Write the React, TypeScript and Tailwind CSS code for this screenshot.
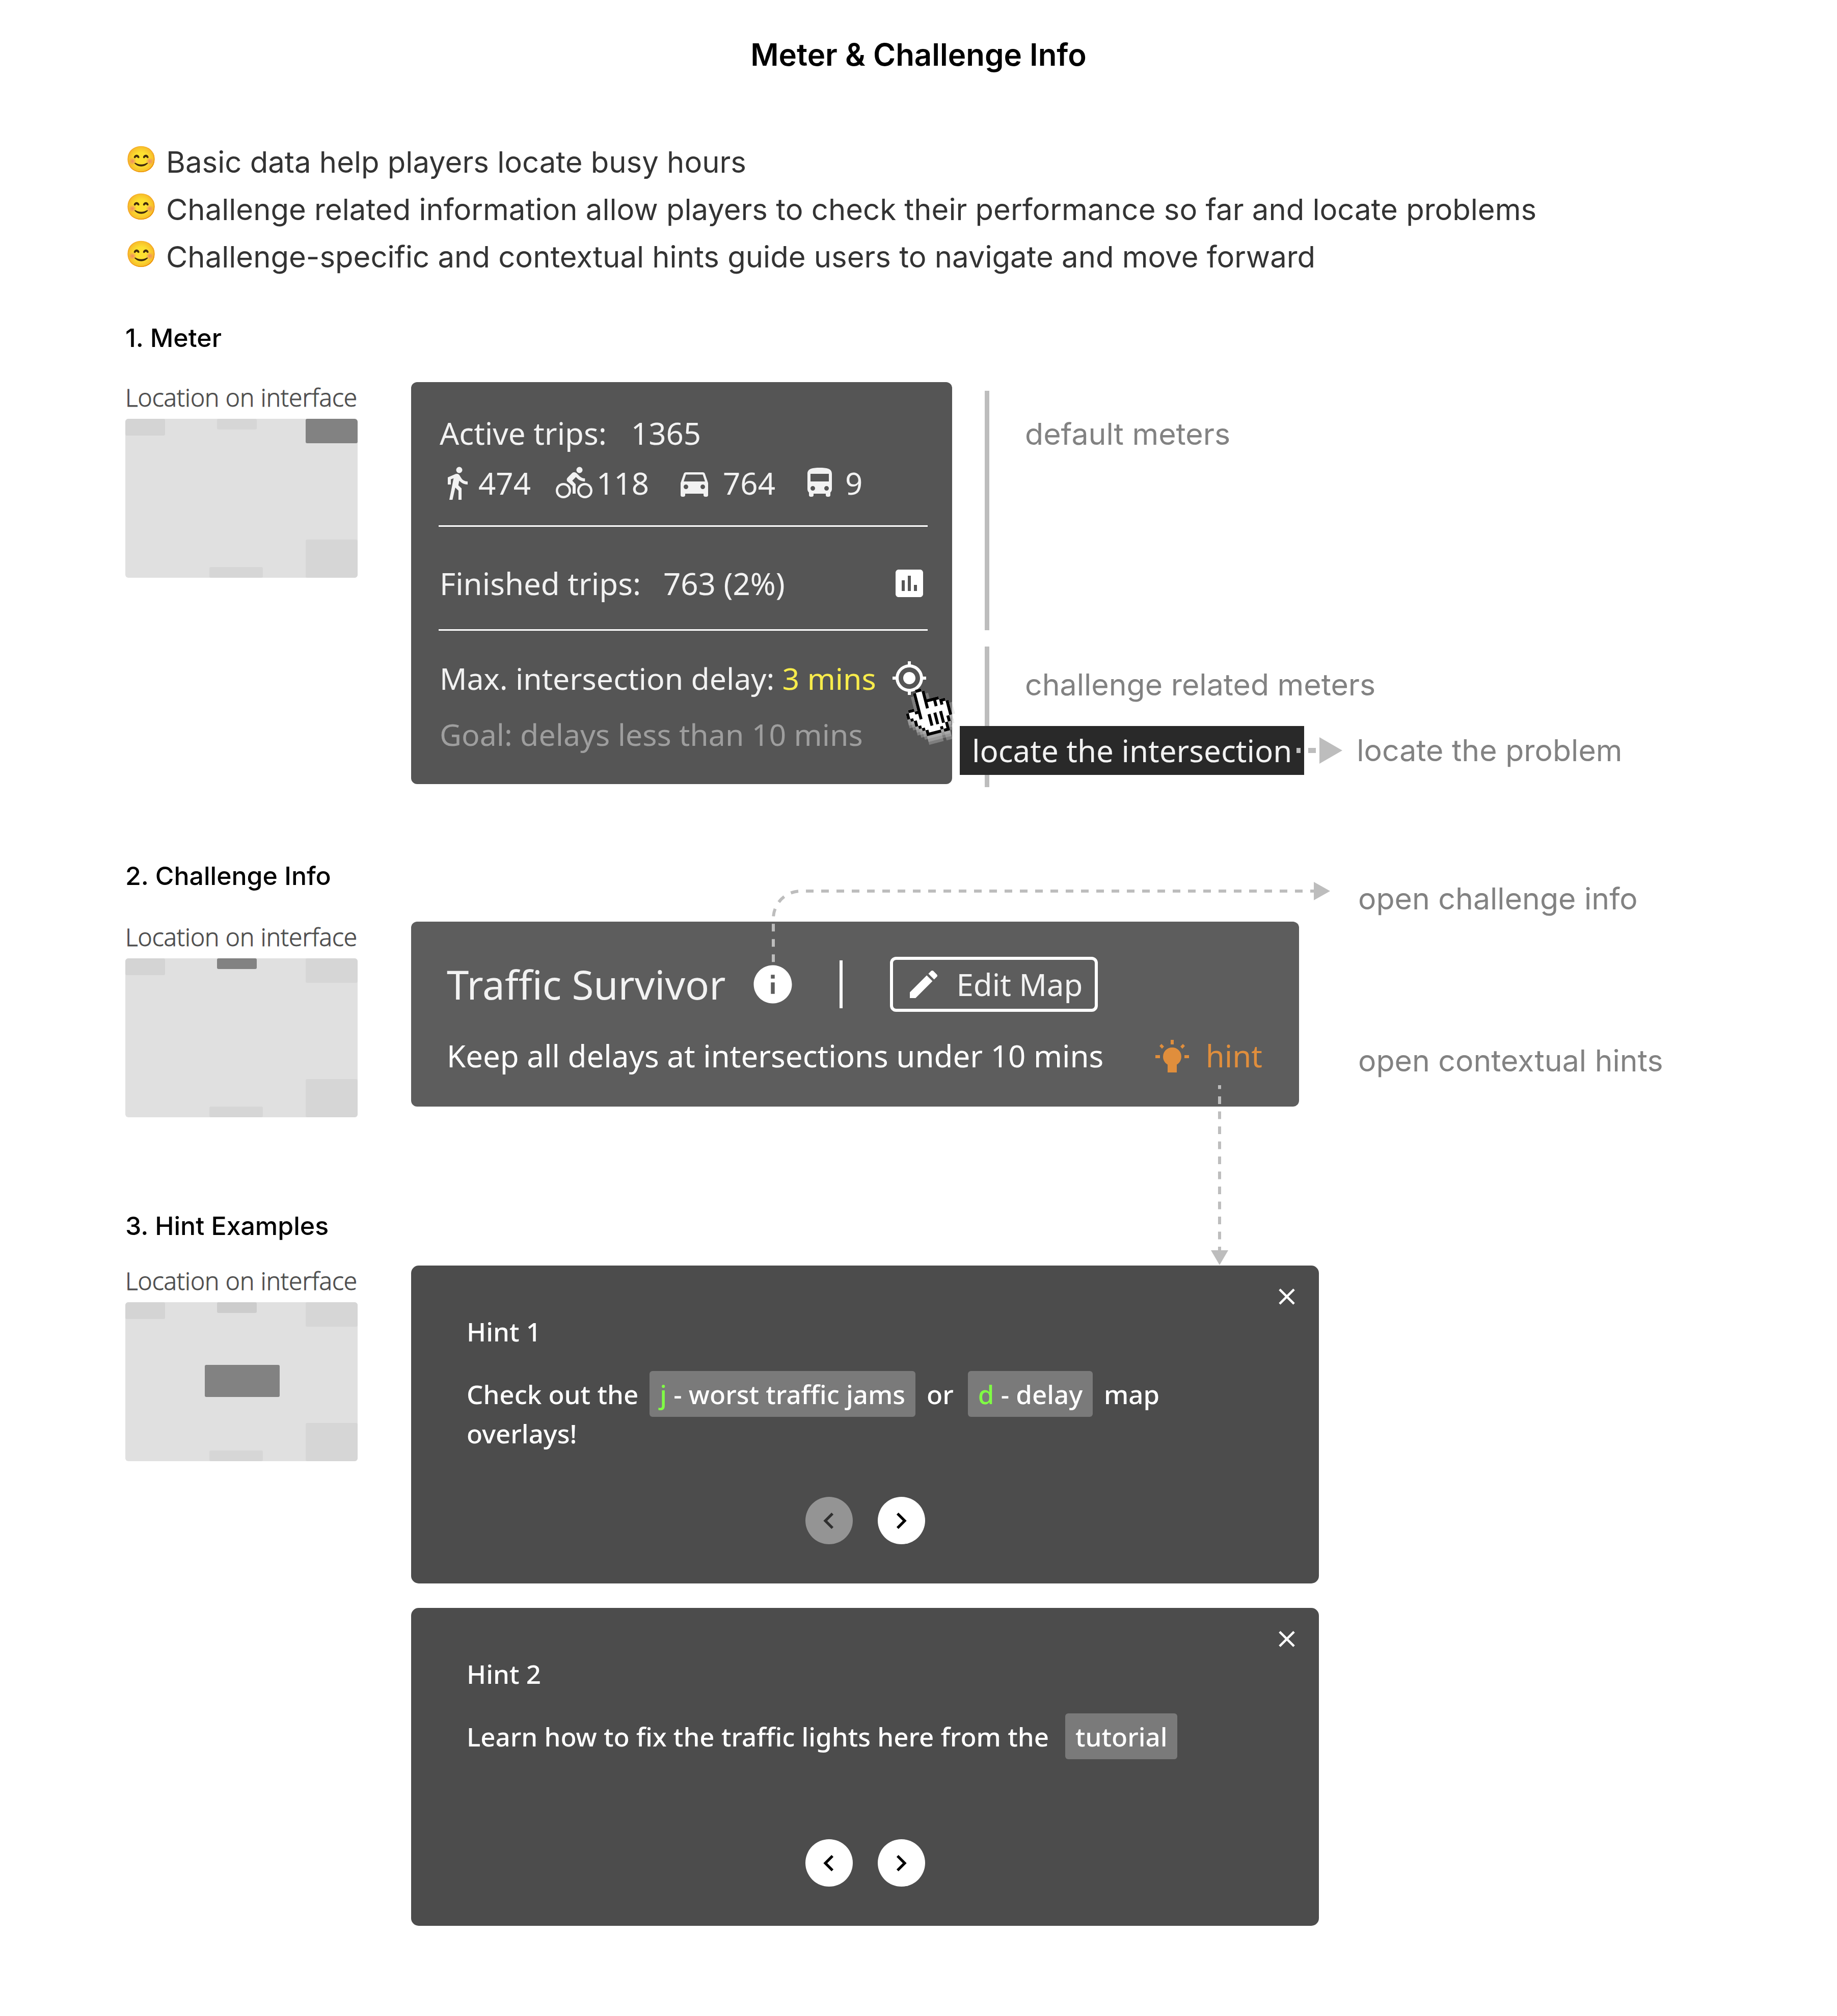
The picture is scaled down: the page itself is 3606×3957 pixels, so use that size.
import React from 'react';

const ICONS = {
  walk: 'M13.5 5.5c1.1 0 2-.9 2-2s-.9-2-2-2-2 .9-2 2 .9 2 2 2zM9.8 8.9L7 23h2.1l1.8-8 2.1 2v6h2v-7.5l-2.1-2 .6-3C14.8 12 16.8 13 19 13v-2c-1.9 0-3.5-1-4.3-2.4l-1-1.6c-.4-.6-1-1-1.7-1-.3 0-.5.1-.8.1L6 8.3V13h2V9.6l1.8-.7',
  bike: 'M15.5 5.5c1.1 0 2-.9 2-2s-.9-2-2-2-2 .9-2 2 .9 2 2 2zM5 12c-2.8 0-5 2.2-5 5s2.2 5 5 5 5-2.2 5-5-2.2-5-5-5zm0 8.5c-1.9 0-3.5-1.6-3.5-3.5s1.6-3.5 3.5-3.5 3.5 1.6 3.5 3.5-1.6 3.5-3.5 3.5zm5.8-10l2.4-2.4.8.8c1.3 1.3 3 2.1 5.1 2.1V9c-1.5 0-2.7-.6-3.6-1.5l-1.9-1.9c-.5-.4-1-.6-1.6-.6s-1.1.2-1.4.6L7.8 8.4c-.4.4-.6.9-.6 1.4 0 .6.2 1.1.6 1.4L11 14v5h2v-6.2l-2.2-2.3zM19 12c-2.8 0-5 2.2-5 5s2.2 5 5 5 5-2.2 5-5-2.2-5-5-5zm0 8.5c-1.9 0-3.5-1.6-3.5-3.5s1.6-3.5 3.5-3.5 3.5 1.6 3.5 3.5-1.6 3.5-3.5 3.5z',
  car: 'M18.92 6.01C18.72 5.42 18.16 5 17.5 5h-11c-.66 0-1.21.42-1.42 1.01L3 12v8c0 .55.45 1 1 1h1c.55 0 1-.45 1-1v-1h12v1c0 .55.45 1 1 1h1c.55 0 1-.45 1-1v-8l-2.08-5.99zM6.5 16c-.83 0-1.5-.67-1.5-1.5S5.67 13 6.5 13s1.5.67 1.5 1.5S7.33 16 6.5 16zm11 0c-.83 0-1.5-.67-1.5-1.5s.67-1.5 1.5-1.5 1.5.67 1.5 1.5-.67 1.5-1.5 1.5zM5 11l1.500-4.500h11L19 11H5z',
  bus: 'M4 16c0 .88.39 1.67 1 2.22V20c0 .55.45 1 1 1h1c.55 0 1-.45 1-1v-1h8v1c0 .55.45 1 1 1h1c.55 0 1-.45 1-1v-1.78c.61-.55 1-1.34 1-2.22V6c0-3.5-3.58-4-8-4s-8 .5-8 4v10zm3.5 1c-.83 0-1.5-.67-1.5-1.5S6.67 14 7.5 14s1.5.67 1.5 1.5S8.33 17 7.5 17zm9 0c-.83 0-1.5-.67-1.5-1.5s.67-1.5 1.5-1.5 1.5.67 1.5 1.5-.67 1.5-1.5 1.5zm1.5-6H6V6h12v5z',
  chart: 'M19 3H5c-1.1 0-2 .9-2 2v14c0 1.1.9 2 2 2h14c1.1 0 2-.9 2-2V5c0-1.1-.9-2-2-2zM9 17H7v-7h2v7zm4 0h-2V7h2v10zm4 0h-2v-4h2v4z',
  locate: 'M12 8c-2.21 0-4 1.79-4 4s1.79 4 4 4 4-1.79 4-4-1.79-4-4-4zm8.94 3c-.46-4.17-3.77-7.48-7.94-7.94V1h-2v2.06C6.83 3.52 3.52 6.83 3.06 11H1v2h2.06c.46 4.17 3.77 7.48 7.94 7.94V23h2v-2.06c4.17-.46 7.48-3.77 7.94-7.94H23v-2h-2.06zM12 19c-3.87 0-7-3.13-7-7s3.13-7 7-7 7 3.13 7 7-3.13 7-7 7z',
  info: 'M12 2C6.48 2 2 6.48 2 12s4.48 10 10 10 10-4.48 10-10S17.52 2 12 2zm1 15h-2v-6h2v6zm0-8h-2V7h2v2z',
  edit: 'M3 17.25V21h3.75L17.81 9.94l-3.75-3.75L3 17.25zM20.71 7.04c.39-.39.39-1.02 0-1.41l-2.34-2.34c-.39-.39-1.02-.39-1.41 0l-1.83 1.83 3.75 3.75 1.83-1.83z',
  close: 'M19 6.41L17.59 5 12 10.59 6.41 5 5 6.41 10.59 12 5 17.59 6.41 19 12 13.41 17.59 19 19 17.59 13.41 12z',
  prev: 'M15.41 7.41L14 6l-6 6 6 6 1.41-1.41L10.83 12z',
  next: 'M10 6L8.59 7.41 13.17 12l-4.58 4.59L10 18l6-6z',
};

function Icon({ name, className = 'size-[72px]' }: { name: keyof typeof ICONS; className?: string }) {
  return (
    <svg viewBox="0 0 24 24" fill="currentColor" aria-hidden="true" className={`block shrink-0 ${className}`}>
      <path d={ICONS[name]} />
    </svg>
  );
}

/* Pixel hand: each entry is [row, first column, last column] */
const HAND_FILL = [
  [0, 5, 6], [1, 4, 7], [2, 4, 7], [3, 4, 7], [4, 4, 11], [5, 4, 13], [6, 1, 2], [6, 4, 14], [7, 0, 14],
  [8, 0, 14], [9, 1, 14], [10, 2, 14], [11, 2, 13], [12, 3, 13], [13, 4, 12], [14, 5, 12], [15, 5, 9], [15, 11, 12],
];
const HAND_LINE = [
  [0, 5, 6], [1, 4, 4], [1, 7, 7], [2, 4, 4], [2, 7, 7], [3, 4, 4], [3, 7, 7], [4, 4, 4], [4, 7, 11],
  [5, 4, 4], [5, 7, 7], [5, 10, 10], [5, 12, 13], [6, 1, 2], [6, 4, 4], [6, 7, 7], [6, 10, 10], [6, 12, 12], [6, 14, 14],
  [7, 0, 0], [7, 3, 4], [7, 14, 14], [8, 0, 0], [8, 4, 4], [8, 14, 14],
  [9, 1, 1], [9, 4, 4], [9, 7, 7], [9, 9, 9], [9, 11, 11], [9, 14, 14],
  [10, 2, 2], [10, 7, 7], [10, 9, 9], [10, 11, 11], [10, 14, 14],
  [11, 2, 2], [11, 7, 7], [11, 9, 9], [11, 11, 11], [11, 13, 13],
  [12, 3, 3], [12, 7, 7], [12, 9, 9], [12, 11, 11], [12, 13, 13],
  [13, 4, 4], [13, 12, 12], [14, 5, 5], [14, 10, 10], [14, 12, 12], [15, 5, 9], [15, 11, 12],
];
const cells = (rows: number[][]) => rows.map(([r, a, b]) => `M${a} ${r}h${b - a + 1}v1h${a - b - 1}z`).join('');

function HandCursor() {
  const fill = cells(HAND_FILL);
  return (
    <svg viewBox="0 0 120 130" aria-hidden="true" className="pointer-events-none absolute left-[21px] top-[50px] z-10 h-[130px] w-[120px]">
      <g transform="translate(32.7 10.7) rotate(-14.5) scale(5.85) translate(-6 -.5)">
        <g fill="#c7c7c7" fillOpacity=".36">
          <path d="M3 2h1v5h-1zM8 2h1v2h-1zM15 7h1v4h-1z" />
          <path d={fill} transform="translate(0 1)" />
          <path d={fill} transform="translate(0 2)" />
          <path d={fill} transform="translate(0 3)" />
        </g>
        <path d={fill} fill="#fff" />
        <path d={cells(HAND_LINE)} fill="#000" />
      </g>
    </svg>
  );
}

type Spot = 'meter' | 'info' | 'hint';

function LocationMap({ spot }: { spot: Spot }) {
  const topCentre = { meter: 'bg-[#d6d6d6]', info: 'bg-[#828282]', hint: 'bg-[#cccccc]' }[spot];
  return (
    <figure className="w-[456px] shrink-0">
      <figcaption className="whitespace-nowrap font-['Open_Sans',sans-serif] text-[48px] font-light leading-[60px] text-[#4f4f4f] [-webkit-text-stroke:1px_#4f4f4f]">
        Location on interface
      </figcaption>
      <div className="relative mt-3 h-[312px] overflow-hidden rounded-md bg-[#e0e0e0]">
        <div className="absolute left-0 top-0 h-[33px] w-[78px] rounded-[3px] bg-[#d4d4d4]" />
        <div className={`absolute left-[180px] top-0 h-[21px] w-[78px] rounded-[3px] ${topCentre}`} />
        <div className={`absolute right-0 top-0 h-[48px] w-[102px] rounded-[3px] ${spot === 'meter' ? 'bg-[#828282]' : 'bg-[#d6d6d6]'}`} />
        <div className="absolute bottom-0 left-[165px] h-[21px] w-[105px] rounded-[3px] bg-[#d6d6d6]" />
        <div className="absolute bottom-0 right-0 h-[75px] w-[102px] rounded-[3px] bg-[#d6d6d6]" />
        {spot === 'hint' && <div className="absolute left-[156px] top-[123px] h-[63px] w-[147px] rounded-[3px] bg-[#828282]" />}
      </div>
    </figure>
  );
}

const NOTE = 'whitespace-nowrap text-[59px] leading-[60px] text-[#828282]';
const PANEL = "font-['Noto_Sans',sans-serif] text-[60px] leading-[60px] text-[#f2f2f2]";
const HEADING = 'text-[50px] font-medium leading-[60px] text-black';

function MeterSection() {
  return (
    <section className="mt-[82px]">
      <h2 className={HEADING}>1. Meter</h2>
      <div className="mt-[57px] flex">
        <LocationMap spot="meter" />
        <div className={`ml-[105px] max-w-[1062px] flex-1 self-start whitespace-nowrap rounded-xl bg-[#555555] pb-[68px] pl-[54px] pr-[48px] pt-[70px] ${PANEL}`}>
          <p className="flex gap-12 pl-0.5">
            <span>Active trips:</span>
            <span>1365</span>
          </p>
          <ul className="mt-8 grid grid-cols-[230px_236px_246px_auto]">
            <li className="flex items-center gap-1.5"><Icon name="walk" />474</li>
            <li className="flex items-center gap-2"><Icon name="bike" />118</li>
            <li className="flex items-center gap-5"><Icon name="car" />764</li>
            <li className="flex items-center gap-3.5"><Icon name="bus" />9</li>
          </ul>
          <hr className="mt-[47px] h-[3px] border-0 bg-white" />
          <div className="mt-[75px] flex items-center justify-between">
            <p className="flex gap-11 pl-0.5">
              <span>Finished trips:</span>
              <span>763 (2%)</span>
            </p>
            <button type="button" aria-label="Show finished trips chart" className="text-white"><Icon name="chart" /></button>
          </div>
          <hr className="mt-[54px] h-[3px] border-0 bg-white" />
          <div className="mt-[57px] flex items-center justify-between">
            <p className="pl-0.5 text-[59px]">Max. intersection delay: <span className="text-[#f8ec4b]">3 mins</span></p>
            <div className="relative">
              <button type="button" aria-label="Locate the intersection" className="block text-white"><Icon name="locate" /></button>
              <HandCursor />
            </div>
          </div>
          <p className="mt-11 pl-0.5 text-[59px] text-[#9e9e9e]">Goal: delays less than 10 mins</p>
        </div>
        <div className="ml-16 mt-[17px] shrink-0">
          <div className="h-[470px] border-l-[9px] border-[#bdbdbd] pl-[70px] pt-[55px]">
            <p className={NOTE}>default meters</p>
          </div>
          <div className="mt-8 border-l-[9px] border-[#bdbdbd] pb-6 pl-[70px] pt-[45px]">
            <p className={NOTE}>challenge related meters</p>
            <div className="-ml-[128px] mt-[51px] flex items-center">
              <div role="tooltip" className={`whitespace-nowrap bg-[#292929] px-6 py-[18px] ${PANEL}`}>locate the intersection</div>
              <svg viewBox="0 0 90 54" aria-hidden="true" className="-ml-[15px] h-[54px] w-[90px] shrink-0">
                <path d="M0 22h8v10H0zM23 22h15v10H23zM45 1l45 26-45 26z" fill="#bdbdbd" />
              </svg>
              <p className={`ml-[28px] ${NOTE}`}>locate the problem</p>
            </div>
          </div>
        </div>
      </div>
    </section>
  );
}

function ChallengeSection() {
  return (
    <section className="mt-36">
      <h2 className={HEADING}>2. Challenge Info</h2>
      <div className="mt-[60px] flex">
        <LocationMap spot="info" />
        <div className={`relative ml-[105px] max-w-[1743px] flex-1 self-start whitespace-nowrap rounded-xl bg-[#5d5d5d] pb-16 pl-[70px] pr-[72px] pt-[69px] ${PANEL}`}>
          <div className="flex items-center">
            <h3 className="text-[78px] leading-[90px]">Traffic Survivor</h3>
            <button type="button" aria-label="Open challenge info" className="ml-[48px] text-white"><Icon name="info" className="size-[90px]" /></button>
            <div className="ml-[86px] h-[94px] w-[6px] bg-white" />
            <button type="button" className="ml-[93px] flex h-[108px] items-center gap-7 rounded-xl border-[6px] border-white px-6">
              <Icon name="edit" className="size-[72px] text-white" />
              Edit Map
            </button>
          </div>
          <div className="mt-[50px] flex items-center justify-between">
            <p className="text-white">Keep all delays at intersections under 10 mins</p>
            <button type="button" className="flex items-center gap-[30px] text-[#e08e3c]">
              <svg viewBox="0 0 72 72" fill="currentColor" aria-hidden="true" className="size-[72px]">
                <circle cx="36" cy="38" r="18" />
                <path d="M27 50h18v19H27zM33 5h6v9h-6zM3 35h9v6H3zM60 35h9v6h-9z" />
                <path d="M11 17l4-4 5 5-4 4.500zM61 17l-4-4-5 5 4 4.500z" />
              </svg>
              hint
            </button>
          </div>
          <svg viewBox="0 0 1096 160" aria-hidden="true" className="absolute -top-[78px] left-[708px] h-[160px] w-[1096px]">
            <path d="M1072 18H57a54 54 0 0 0-54 54v88" fill="none" stroke="#bdbdbd" strokeWidth="6" strokeDasharray="15 15" />
            <path d="M1064 0l32 18-32 18z" fill="#bdbdbd" />
          </svg>
          <svg viewBox="0 0 34 354" aria-hidden="true" className="absolute left-[1570px] top-[321px] h-[354px] w-[34px]">
            <path d="M17 332V0" fill="none" stroke="#bdbdbd" strokeWidth="6" strokeDasharray="15 14.5" />
            <path d="M0 324h34l-17 29z" fill="#bdbdbd" />
          </svg>
        </div>
        <div className="-mt-[75px] ml-[116px] shrink-0">
          <p className={NOTE}>open challenge info</p>
          <p className={`mt-[258px] ${NOTE}`}>open contextual hints</p>
        </div>
      </div>
    </section>
  );
}

const CHIP = 'flex h-[90px] items-center whitespace-pre rounded-md bg-[#7a7a7a] px-5';

function HintCard({ title, first = false, children }: { title: string; first?: boolean; children: React.ReactNode }) {
  return (
    <article className="rounded-[15px] bg-[#4c4c4c] pb-[77px] pt-[34px] font-['Noto_Sans',sans-serif] text-[51px] font-medium leading-[60px] text-white">
      <div className="flex justify-end pr-9">
        <button type="button" aria-label="Close"><Icon name="close" className="size-[54px]" /></button>
      </div>
      <div className="mt-[11px] min-h-[355px] pl-[109px]">
        <h3>{title}</h3>
        <div className="mt-12">{children}</div>
      </div>
      <div className="flex justify-center gap-[49px] text-black">
        <button type="button" aria-label="Previous hint" disabled={first} className="flex size-[93px] items-center justify-center rounded-full bg-white disabled:bg-[#949494] disabled:text-[#303030]">
          <Icon name="prev" className="size-[64px]" />
        </button>
        <button type="button" aria-label="Next hint" className="flex size-[93px] items-center justify-center rounded-full bg-white">
          <Icon name="next" className="size-[64px]" />
        </button>
      </div>
    </article>
  );
}

function HintSection() {
  return (
    <section className="mt-[183px]">
      <h2 className={HEADING}>3. Hint Examples</h2>
      <div className="mt-12 flex">
        <LocationMap spot="hint" />
        <div className="ml-[105px] flex max-w-[1782px] flex-1 flex-col gap-12">
          <HintCard title="Hint 1" first>
            <p className="flex flex-wrap items-center gap-x-[22px]">
              Check out the
              <span className={CHIP}><kbd className="font-[inherit] text-[#80ff44]">j</kbd> - worst traffic jams</span>
              or
              <span className={`ml-1.5 ${CHIP}`}><kbd className="font-[inherit] text-[#80ff44]">d</kbd> - delay</span>
              map
            </p>
            <p className="mt-0.5">overlays!</p>
          </HintCard>
          <HintCard title="Hint 2">
            <p className="flex flex-wrap items-center gap-x-8">
              Learn how to fix the traffic lights here from the
              <a href="#tutorial" className={CHIP}>tutorial</a>
            </p>
          </HintCard>
        </div>
      </div>
    </section>
  );
}

const POINTS = [
  'Basic data help players locate busy hours',
  'Challenge related information allow players to check their performance so far and locate problems',
  'Challenge-specific and contextual hints guide users to navigate and move forward',
];

export default function App() {
  return (
    <main className="min-h-screen bg-white px-[246px] pb-[177px] pt-[71px] font-['Inter',sans-serif]">
      <h1 className="text-center text-[60px] font-semibold leading-[72px] text-black">Meter &amp; Challenge Info</h1>
      <ul className="mt-[129px]">
        {POINTS.map((text) => (
          <li key={text} className="flex text-[58px] leading-[93px] text-[#333333]">
            <span className="w-[80px] shrink-0 text-[50px] leading-[80px]">😊</span>
            {text}
          </li>
        ))}
      </ul>
      <MeterSection />
      <ChallengeSection />
      <HintSection />
    </main>
  );
}
